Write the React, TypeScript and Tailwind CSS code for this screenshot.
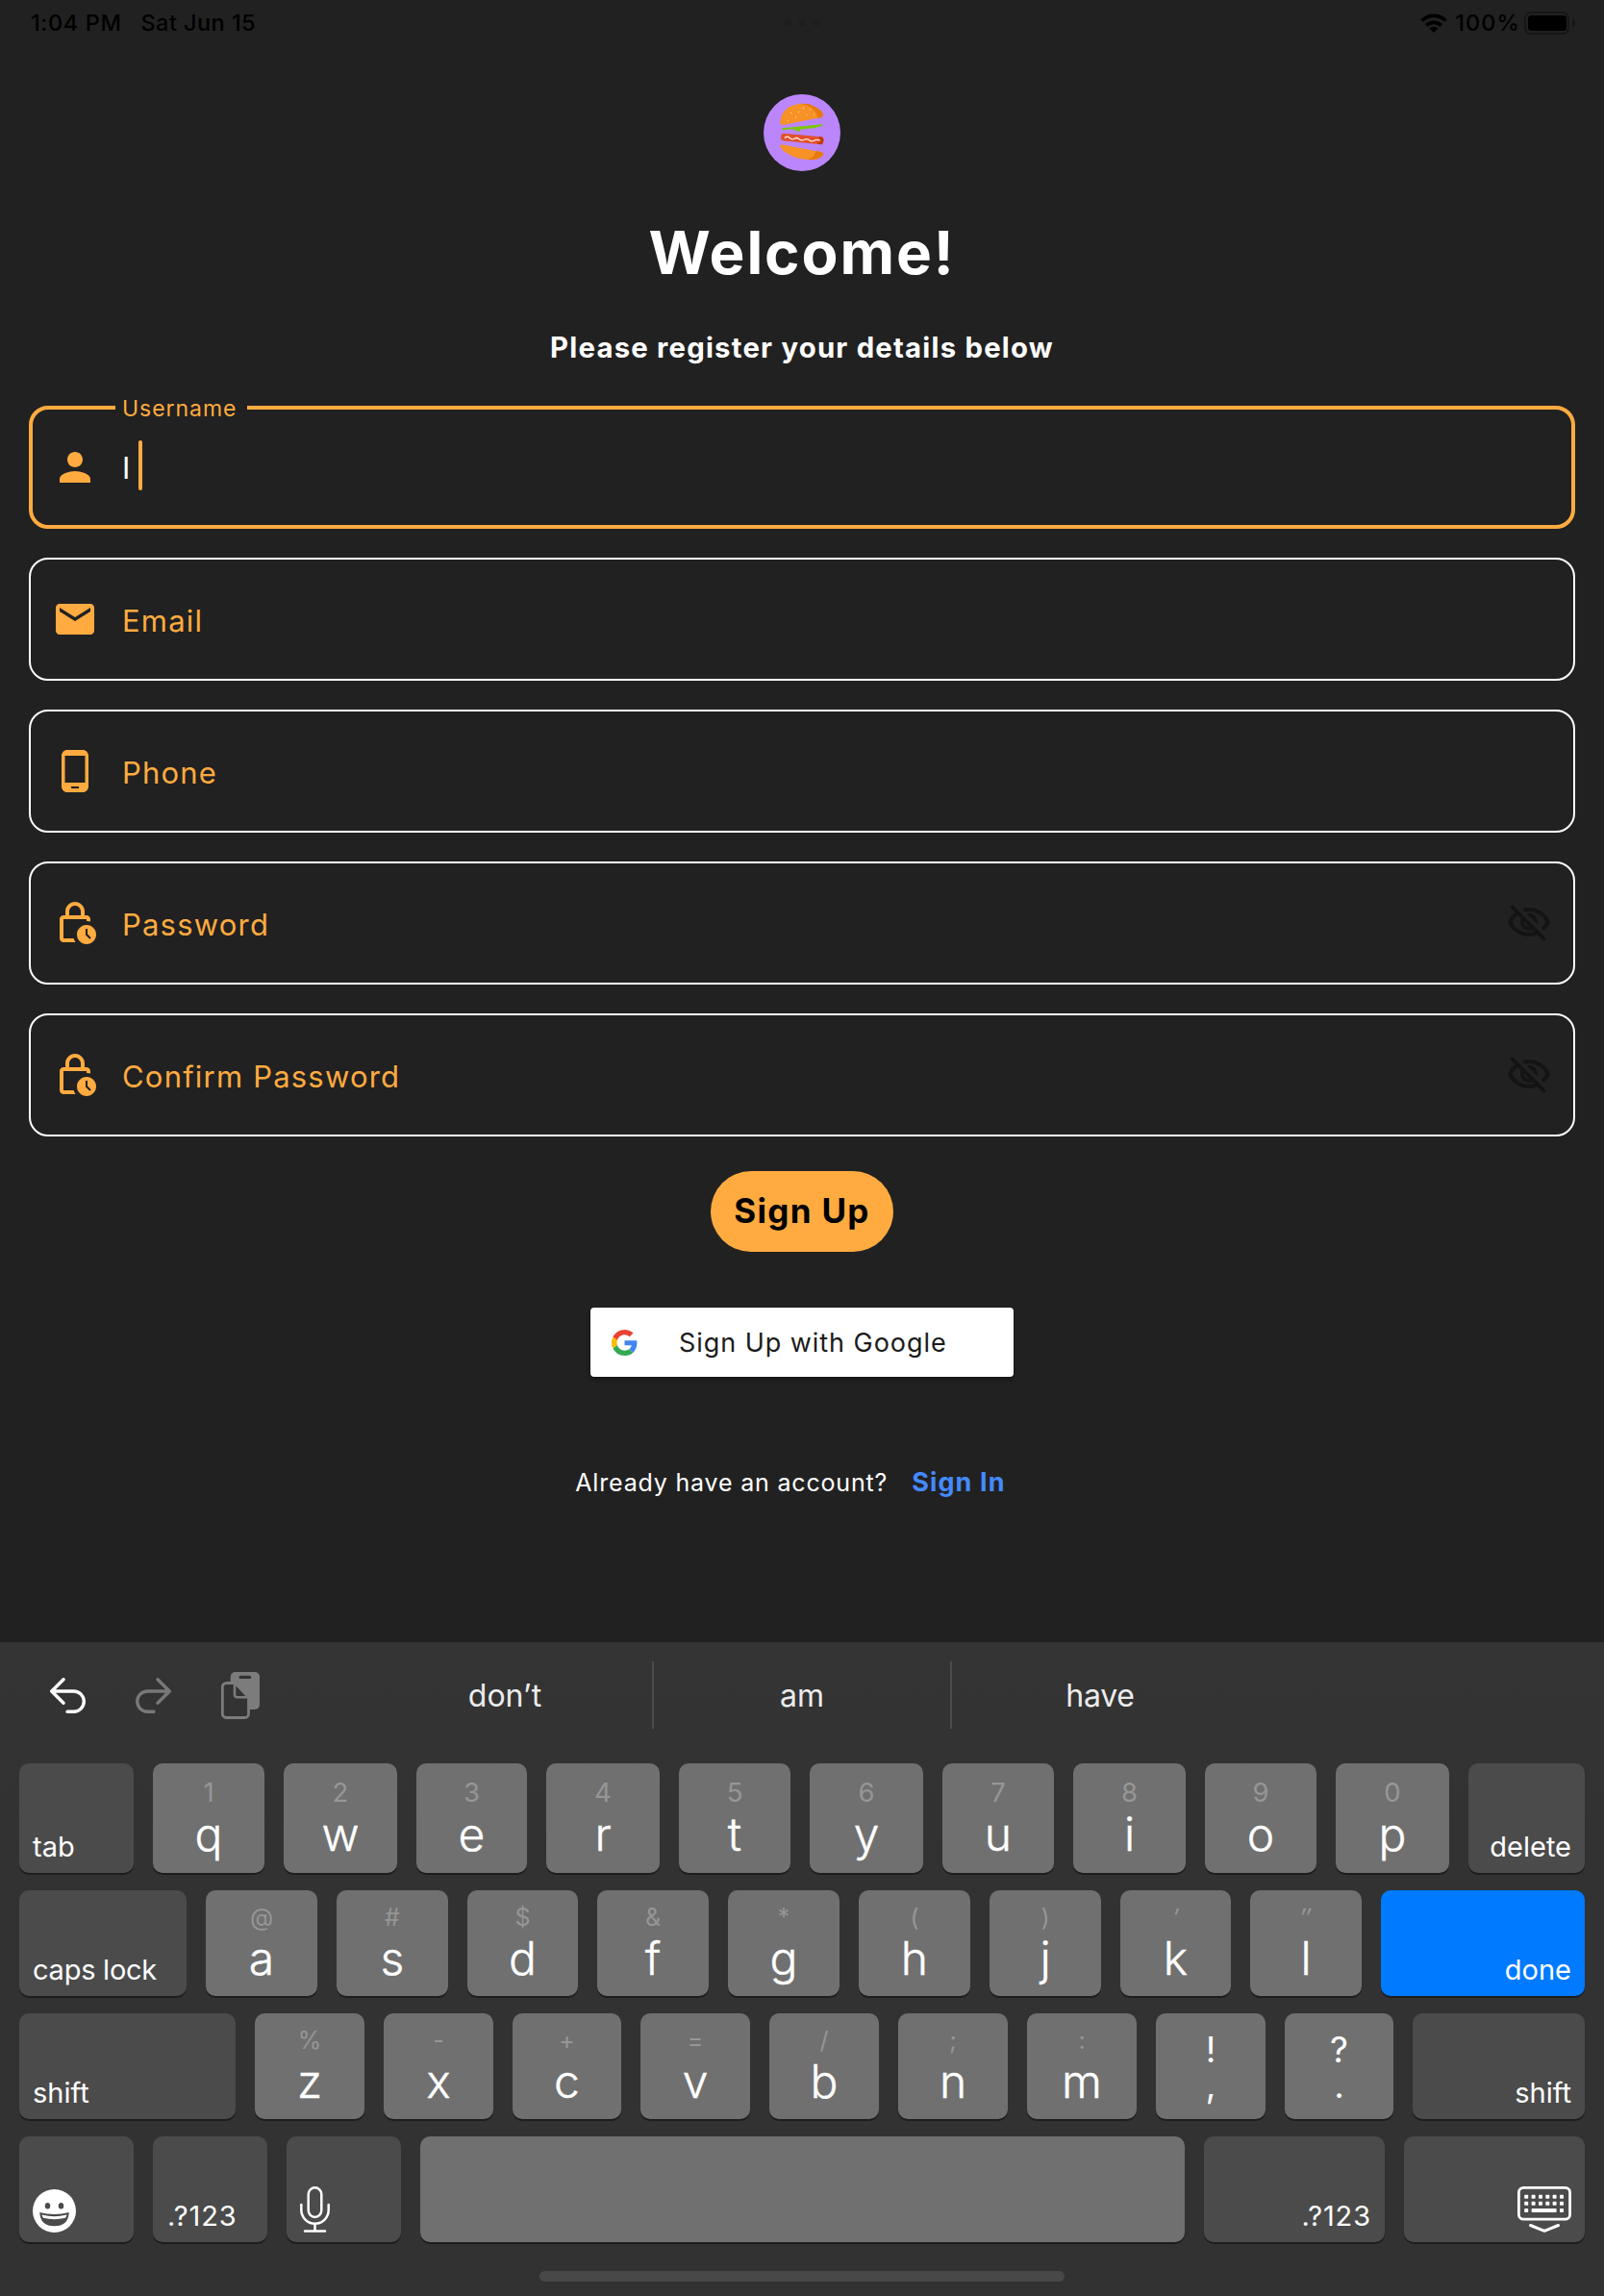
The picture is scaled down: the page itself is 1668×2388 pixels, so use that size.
import React from "react";
import {
  MdEmail,
  MdOutlineLockClock,
  MdOutlineVisibilityOff,
  MdPerson,
  MdPhoneAndroid,
} from "react-icons/md";
import type { IconType } from "react-icons";

/* ---------- Status bar ---------- */

function StatusBar() {
  return (
    <header className="relative flex h-[47px] shrink-0 items-center justify-between pl-8 pr-[30px] text-[23.5px] font-medium leading-none text-black">
      <div className="flex gap-[20px] whitespace-nowrap">
        <span className="tracking-[0.6px]">1:04 PM</span>
        <span className="tracking-[0.45px]">Sat Jun 15</span>
      </div>
      <div className="absolute left-1/2 top-[20px] flex -translate-x-1/2 gap-[8px]">
        <i className="size-[7px] rounded-full bg-[#1e1e1e]" />
        <i className="size-[7px] rounded-full bg-[#1e1e1e]" />
        <i className="size-[7px] rounded-full bg-[#1e1e1e]" />
      </div>
      <div className="flex items-center">
        <svg width="28" height="20" viewBox="0 0 28 20" fill="none" stroke="#000" strokeWidth="3.6">
          <path d="M1.4 7.6a17.8 17.8 0 0 1 25.2 0" />
          <path d="M6.2 12.6a11 11 0 0 1 15.6 0" />
          <path d="M9.4 15.6a6.5 6.5 0 0 1 9.2 0L14 20Z" fill="#000" stroke="none" />
        </svg>
        <span className="ml-[8px] tracking-[1.1px]">100%</span>
        <div className="ml-[4px] flex h-6 w-[47px] items-center justify-center rounded-[7px] border-2 border-[#161616]">
          <div className="h-4 w-10 rounded-[3.5px] bg-black" />
        </div>
        <div className="ml-[3px] h-2 w-[3px] rounded-r-full bg-[#161616]" />
      </div>
    </header>
  );
}

/* ---------- Logo ---------- */

function BurgerLogo() {
  return (
    <svg className="mt-[51px] size-20 shrink-0" viewBox="0 0 80 80">
      <circle cx="40" cy="40" r="40" fill="#bb86fc" />
      <path d="M20.5 32Q17 31.800 17.300 28Q19 17 28 12.500Q40 7.500 51 12Q60 15.500 62 21Q62.300 23.300 60 24Z" fill="#f79226" />
      <path d="M39.500 9.900Q47 9.300 52 12.200Q60.500 16 62 21Q62.300 23.300 60 24L56.500 25Q54.500 13.500 39.500 9.900Z" fill="#e8790c" />
      <g fill="#ffd9a3">
        <circle cx="28.500" cy="19.500" r=".7" />
        <circle cx="36.500" cy="18.500" r=".7" />
        <circle cx="41.500" cy="14.500" r=".7" />
        <circle cx="48.500" cy="16" r=".6" />
        <circle cx="33.500" cy="24" r=".7" />
        <circle cx="45" cy="21.500" r=".6" />
        <circle cx="52.500" cy="21" r=".6" />
        <circle cx="25.500" cy="27.300" r=".6" />
      </g>
      <path d="M19.200 35.200L61 31.300V33Q58 34 55 34.400Q52 36 48 35.500Q42 36 39 36.800Q36.500 40 34.500 38.300Q31 36 28 36.300Q22 37.500 19.200 36.800Z" fill="#7cc70b" />
      <path d="M20.500 40.800L60 44.300Q62.800 44.800 62.400 48.300Q62 52.300 59.500 52.200L20 48.200Q17.800 47.800 18.100 44.500Q18.300 40.700 20.500 40.800Z" fill="#e2502b" />
      <path d="M58 44.100L60 44.300Q62.800 44.800 62.400 48.300Q62 52.300 59.500 52.200L56 51.800Q59 48.500 58 44.100Z" fill="#bf3a10" />
      <path d="M22.300 45.300Q24.500 42.800 27 45.300T32 46.200T37 46.700T42.300 47.300T47.500 47.800T52.500 48.300T58.500 48" fill="none" stroke="#ffe9dc" strokeWidth="1.300" strokeLinecap="round" />
      <path d="M18.700 52.300L60.500 60.200Q62.700 61 61.800 63.500Q58 68.500 47.500 68.200Q33 67.500 23 60.500Q17 56 17.300 53.500Q17.500 52.200 18.700 52.300Z" fill="#f79226" />
      <path d="M54.500 59.100L60.500 60.200Q62.700 61 61.800 63.500Q57.500 68.500 46 68.100Q53 66 54.500 59.100Z" fill="#e8790c" />
    </svg>
  );
}

/* ---------- Form ---------- */

type FieldProps = { label: string; icon: IconType; obscured?: boolean };

function Field({ label, icon: Icon, obscured }: FieldProps) {
  return (
    <div className="flex h-32 items-center rounded-[20px] border-2 border-white px-[22px]">
      <Icon className="size-12 shrink-0 text-[#ffab40]" />
      <span className="ml-[25px] flex-1 pt-[3px] text-[31px] leading-none tracking-[1.2px] text-[#ffab40]">
        {label}
      </span>
      {obscured && <MdOutlineVisibilityOff className="size-12 shrink-0 text-[#141414]" />}
    </div>
  );
}

function UsernameField() {
  return (
    <div className="relative flex h-32 items-center rounded-[20px] border-4 border-[#ffab40] px-5">
      <span className="absolute -top-[17px] left-[86px] flex h-8 w-[137px] items-center bg-[#212121] pl-[7px] text-[23px] leading-none tracking-[0.95px] text-[#ffab40]">
        Username
      </span>
      <MdPerson className="size-12 shrink-0 text-[#ffab40]" />
      <span className="ml-[25px] w-[17px] pt-px text-[31px] leading-none text-white">I</span>
      <span className="-mt-1 h-[52px] w-1 rounded-sm bg-[#ffab40]" />
    </div>
  );
}

function GoogleLogo() {
  return (
    <svg width="27" height="27" viewBox="0 0 48 48">
      <path fill="#ea4335" d="M24 9.500c3.540 0 6.710 1.220 9.210 3.600l6.850-6.850C35.900 2.380 30.470 0 24 0 14.620 0 6.510 5.380 2.560 13.220l7.980 6.190C12.430 13.720 17.740 9.500 24 9.500z" />
      <path fill="#4285f4" d="M46.980 24.550c0-1.570-.15-3.090-.38-4.550H24v9.020h12.940c-.58 2.960-2.260 5.480-4.780 7.180l7.730 6c4.510-4.180 7.090-10.360 7.090-17.650z" />
      <path fill="#fbbc05" d="M10.530 28.590c-.48-1.450-.76-2.990-.76-4.590s.27-3.140.76-4.590l-7.980-6.190C.92 16.460 0 20.120 0 24c0 3.880.92 7.540 2.560 10.780l7.970-6.190z" />
      <path fill="#34a853" d="M24 48c6.480 0 11.930-2.130 15.890-5.810l-7.730-6c-2.150 1.450-4.920 2.300-8.160 2.300-6.260 0-11.570-4.220-13.470-9.910l-7.980 6.190C6.510 42.620 14.620 48 24 48z" />
    </svg>
  );
}

function SignUpForm() {
  return (
    <main className="flex flex-1 flex-col items-center">
      <BurgerLogo />
      <h1 className="mt-[49px] text-[62px] font-bold leading-[72px] tracking-[1.9px] text-white">Welcome!</h1>
      <p className="mt-[45px] text-[29.3px] font-bold leading-9 tracking-[1.22px] text-white">
        Please register your details below
      </p>
      <div className="mt-[42px] flex w-full flex-col gap-[30px] px-[30px]">
        <UsernameField />
        <Field label="Email" icon={MdEmail} />
        <Field label="Phone" icon={MdPhoneAndroid} />
        <Field label="Password" icon={MdOutlineLockClock} obscured />
        <Field label="Confirm Password" icon={MdOutlineLockClock} obscured />
      </div>
      <button className="mt-9 h-[84px] w-[190px] rounded-full bg-[#ffab40] pb-0.5 text-[35px] font-bold leading-none tracking-[1.3px] text-black">
        Sign Up
      </button>
      <button className="mt-[58px] flex h-[72px] w-[440px] items-center rounded bg-white pl-[22px] text-[27px] leading-none tracking-[0.95px] text-[#1b1b1b] shadow-[0_3px_4px_rgba(0,0,0,0.35)]">
        <GoogleLogo />
        <span className="ml-[43px]">Sign Up with Google</span>
      </button>
      <div className="mt-[94px] flex items-center gap-[25px] pr-6 leading-8">
        <span className="text-[25px] tracking-[0.82px] text-white">Already have an account?</span>
        <a className="text-[27px] font-bold tracking-[1.13px] text-[#448aff]">Sign In</a>
      </div>
    </main>
  );
}

/* ---------- Keyboard ---------- */

function Toolbar() {
  return (
    <div className="flex h-[126px] items-center pb-4 pl-[52px] text-[32px] leading-none text-[#ececec]">
      <svg width="37" height="37" viewBox="0 0 37 37" fill="none" stroke="#fff" strokeWidth="3.4" strokeLinecap="round" strokeLinejoin="round">
        <path d="M14 1.700L1.700 14L14 26.300M1.700 14H24.700a10.600 10.600 0 0 1 0 21.200H18" />
      </svg>
      <svg className="ml-[52px]" width="37" height="37" viewBox="0 0 37 37" fill="none" stroke="#787878" strokeWidth="3.4" strokeLinecap="round" strokeLinejoin="round">
        <path d="M23 1.700L35.300 14L23 26.300M35.300 14H12.300a10.600 10.600 0 0 0 0 21.200H19" />
      </svg>
      <svg className="ml-[52px]" width="40" height="49" viewBox="0 0 40 49">
        <rect x="9.700" width="30.300" height="39" rx="5" fill="#7c7c7c" />
        <rect x="18.500" y="3.800" width="12.700" height="3.200" rx="1.600" fill="#333" />
        <path d="M5 11.500H14.500L28.500 26.500V43.500a4 4 0 0 1-4 4H5.300a4 4 0 0 1-4-4V15.500a4 4 0 0 1 4-4Z" fill="#333" stroke="#7c7c7c" strokeWidth="2.800" />
        <path d="M14 12V24a2.300 2.300 0 0 0 2.300 2.300H28" fill="none" stroke="#7c7c7c" strokeWidth="2.600" />
      </svg>
      <div className="ml-[102px] w-[306px] pt-0.5 text-center">don’t</div>
      <div className="h-[70px] w-0.5 bg-[#4b4b4b]" />
      <div className="w-[308px] pt-0.5 text-center">am</div>
      <div className="h-[70px] w-0.5 bg-[#4b4b4b]" />
      <div className="w-[308px] pt-0.5 text-center tracking-[-0.2px]">have</div>
    </div>
  );
}

const keyShadow = "shadow-[0_2px_0_#1d1d1d]";

function CharKey({ hint, char, tall }: { hint: string; char: string; tall?: boolean }) {
  const slanted = hint === "′" || hint === "″";
  return (
    <div className={`flex flex-col items-center rounded-[10px] bg-[#707070] ${keyShadow} ${tall ? "pt-[15px]" : "pt-[13px]"}`}>
      <span
        className={`leading-[30px] text-[#969696] ${tall ? "text-[27.5px]" : "text-[25px]"} ${slanted ? "-skew-x-12" : ""}`}
      >
        {hint}
      </span>
      <span
        className={`text-[48px] font-light leading-[48px] text-white [-webkit-text-stroke:0.4px_white] ${tall ? "mt-[5px]" : "mt-1"}`}
      >
        {char}
      </span>
    </div>
  );
}

function PunctKey({ top, bottom }: { top: string; bottom: string }) {
  return (
    <div className={`flex flex-col items-center rounded-[10px] bg-[#707070] pt-[19px] text-[37px] leading-[37px] text-white ${keyShadow}`}>
      <span>{top}</span>
      <span>{bottom}</span>
    </div>
  );
}

function FnKey({ children, right, blue }: { children: React.ReactNode; right?: boolean; blue?: boolean }) {
  return (
    <div
      className={`flex items-end rounded-[10px] px-[14px] pb-3 text-[29px] leading-[30px] text-white ${keyShadow} ${right ? "justify-end" : ""} ${blue ? "bg-[#007aff]" : "bg-[#4b4b4b]"}`}
    >
      {children}
    </div>
  );
}

function EmojiIcon() {
  return (
    <svg className="-mb-0.5" width="45" height="45" viewBox="0 0 45 45">
      <circle cx="22.500" cy="22.500" r="22.500" fill="#fff" />
      <ellipse cx="15.500" cy="17.200" rx="2.700" ry="3.200" fill="#4b4b4b" />
      <ellipse cx="29.500" cy="17.200" rx="2.700" ry="3.200" fill="#4b4b4b" />
      <path d="M7.200 24Q22.500 28 37.800 24Q37 38.300 22.500 38.300Q8 38.300 7.200 24Z" fill="#4b4b4b" />
      <path d="M9.500 26.600Q22.500 30 35.500 26.600Q35 28.500 34 29.800Q22.500 32.500 11 29.800Q10 28.500 9.500 26.600Z" fill="#fff" />
    </svg>
  );
}

function MicIcon() {
  return (
    <svg className="-mb-0.5" width="31" height="48" viewBox="0 0 31 48" fill="none" stroke="#fff" strokeWidth="2.500" strokeLinecap="round">
      <rect x="8.700" y="1.300" width="13.600" height="30.600" rx="6.800" />
      <path d="M1.300 19V24.500a14.200 14.200 0 0 0 28.400 0V19M15.500 39V46.600M5 46.600H26" />
    </svg>
  );
}

function HideKeyboardIcon() {
  const xs = [9.200, 16.600, 24, 31.300, 38.600, 46];
  return (
    <svg className="-mb-0.5" width="56" height="48" viewBox="0 0 56 48" fill="none">
      <rect x="1.400" y="1.400" width="53.200" height="32.800" rx="5" stroke="#fff" strokeWidth="2.800" />
      <g fill="#fff">
        {xs.map((x) => (
          <React.Fragment key={x}>
            <rect x={x - 2} y="8.700" width="4" height="4" rx=".8" />
            <rect x={x - 2} y="15.800" width="4" height="4" rx=".8" />
          </React.Fragment>
        ))}
        <rect x="7.200" y="23" width="4" height="4" rx=".8" />
        <rect x="14.600" y="23" width="26" height="4" rx=".8" />
        <rect x="44" y="23" width="4" height="4" rx=".8" />
      </g>
      <path d="M13.500 40.500L28 46.300L42.500 40.500" stroke="#fff" strokeWidth="3" strokeLinecap="round" strokeLinejoin="round" />
    </svg>
  );
}

const row1 = [["1", "q"], ["2", "w"], ["3", "e"], ["4", "r"], ["5", "t"], ["6", "y"], ["7", "u"], ["8", "i"], ["9", "o"], ["0", "p"]];
const row2 = [["@", "a"], ["#", "s"], ["$", "d"], ["&", "f"], ["*", "g"], ["(", "h"], [")", "j"], ["′", "k"], ["″", "l"]];
const row3 = [["%", "z"], ["-", "x"], ["+", "c"], ["=", "v"], ["/", "b"], [";", "n"], [":", "m"]];

function Keyboard() {
  return (
    <section className="flex h-[680px] shrink-0 flex-col bg-gradient-to-b from-[#343434] to-[#323232] to-30%">
      <Toolbar />
      <div className="flex flex-col gap-[18px] px-5">
        <div className="grid h-[114px] grid-cols-[119px_116px_118px_115px_118px_116px_118px_116px_117px_116px_118px_121px] gap-5">
          <FnKey>tab</FnKey>
          {row1.map(([h, c]) => <CharKey key={c} hint={h} char={c} tall />)}
          <FnKey right>delete</FnKey>
        </div>
        <div className="grid h-[110px] grid-cols-[174px_116px_116px_115px_116px_116px_116px_116px_115px_116px_212px] gap-5">
          <FnKey><span className="tracking-[-0.25px]">caps lock</span></FnKey>
          {row2.map(([h, c]) => <CharKey key={c} hint={h} char={c} />)}
          <FnKey right blue>done</FnKey>
        </div>
        <div className="grid h-[110px] grid-cols-[225px_114px_114px_113px_114px_114px_114px_114px_114px_113px_179px] gap-5">
          <FnKey>shift</FnKey>
          {row3.map(([h, c]) => <CharKey key={c} hint={h} char={c} />)}
          <PunctKey top="!" bottom="," />
          <PunctKey top="?" bottom="." />
          <FnKey right>shift</FnKey>
        </div>
        <div className="grid h-[110px] grid-cols-[119px_119px_119px_795px_188px_188px] gap-5">
          <FnKey><EmojiIcon /></FnKey>
          <FnKey><span className="pl-px tracking-[0.9px]">.?123</span></FnKey>
          <FnKey><MicIcon /></FnKey>
          <div className={`rounded-[10px] bg-[#707070] ${keyShadow}`} />
          <FnKey right><span className="tracking-[0.9px]">.?123</span></FnKey>
          <FnKey right><HideKeyboardIcon /></FnKey>
        </div>
      </div>
      <div className="mx-auto mt-[30px] h-[11px] w-[546px] rounded-full bg-[#484848]" />
    </section>
  );
}

export default function App() {
  return (
    <div className="flex h-[2388px] w-[1668px] flex-col overflow-hidden bg-[#212121] font-['Inter','Liberation_Sans',sans-serif]">
      <StatusBar />
      <SignUpForm />
      <Keyboard />
    </div>
  );
}
